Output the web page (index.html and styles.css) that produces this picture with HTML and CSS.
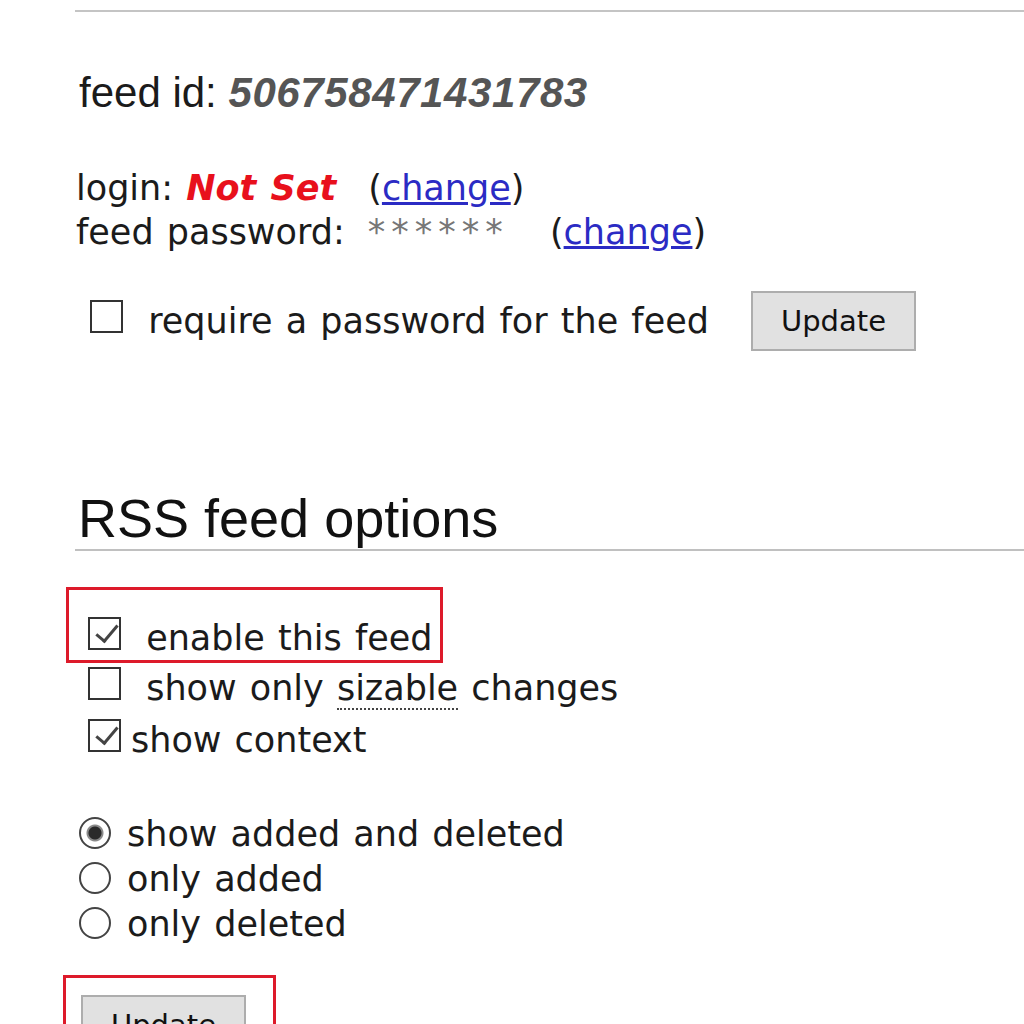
FILE: index.html
```html
<!DOCTYPE html>
<html lang="en">
<head>
<meta charset="UTF-8">
<title>Feed settings</title>
<link rel="stylesheet" href="styles.css">
</head>
<body>
<div class="page">
<hr class="rule">

<p class="feed-id">feed id: <b>506758471431783</b></p>

<div class="creds">
<div>login: <em class="not-set">Not Set</em> <span class="chg">(<a href="#">change</a>)</span></div>
<div>feed password: <span class="stars">******</span> <span class="chg2">(<a href="#">change</a>)</span></div>
</div>

<form class="pw-row">
<label class="pw-label"><input type="checkbox" class="cb"> require a password for the feed</label>
<button type="button" class="btn">Update</button>
</form>

<h2 class="section">RSS feed options</h2>

<form class="options">
<div class="mark first">
<label class="opt"><input type="checkbox" class="cb" checked> <span class="t1">enable this feed</span></label>
</div>
<label class="opt row2"><input type="checkbox" class="cb"> <span class="t1">show only <abbr title="changes bigger than a few characters">sizable</abbr> changes</span></label>
<label class="opt row3"><input type="checkbox" class="cb" checked><span class="t3">show context</span></label>

<div class="radios">
<label class="rad"><input type="radio" name="mode" class="rb" checked>show added and deleted</label>
<label class="rad"><input type="radio" name="mode" class="rb">only added</label>
<label class="rad"><input type="radio" name="mode" class="rb">only deleted</label>
</div>

<div class="mark second">
<button type="button" class="btn">Update</button>
</div>
</form>
</div>
</body>
</html>
```

FILE: styles.css
```css
/* feed settings page */
body {
    margin: 0;
    background: #fff;
    color: #1b1b1b;
    font-family: "DejaVu Sans", Verdana, sans-serif;
    font-size: 35px;
    word-spacing: 2px;
}

.page {
    padding-left: 76px;
    overflow: hidden;
    height: 1024px;
}

.rule {
    margin: 10px 0 0 -1px;
    border: 0;
    border-top: 2px solid #c4c4c4;
    height: 0;
}

.feed-id {
    margin: 57px 0 0 3px;
    font-family: "Liberation Sans", Arial, sans-serif;
    font-size: 42px;
    line-height: 48px;
    word-spacing: 0;
}

.feed-id b {
    font-style: italic;
    color: #555;
    letter-spacing: 0.6px;
}

.creds {
    margin-top: 49px;
    line-height: 44px;
}

.not-set {
    color: #e8101c;
    font-weight: bold;
    margin-right: 19px;
}

.stars {
    color: #777;
    letter-spacing: 6px;
    margin: 0 28px 0 10px;
}

a {
    color: #2b2bc4;
}

.pw-row {
    margin-top: 37px;
    display: flex;
    align-items: center;
}

.pw-label {
    line-height: 44px;
    margin-left: 14px;
    margin-right: 42px;
}

.cb {
    appearance: none;
    -webkit-appearance: none;
    box-sizing: border-box;
    width: 33px;
    height: 33px;
    margin: 0 12px 0 0;
    border: 2px solid #333;
    background: #fff;
    vertical-align: baseline;
    position: relative;
}

.cb:checked::after {
    content: "";
    position: absolute;
    left: 11px;
    top: 1px;
    width: 9px;
    height: 19px;
    border-right: 3px solid #444;
    border-bottom: 3px solid #444;
    transform: rotate(40deg);
}

.btn {
    box-sizing: border-box;
    width: 165px;
    height: 60px;
    background: #e1e1e1;
    border: 2px solid #adadad;
    font-family: "DejaVu Sans", Verdana, sans-serif;
    font-size: 29px;
    color: #111;
    padding: 0;
}

.section {
    margin: 137px 0 0 -1px;
    padding: 0 0 1px 3px;
    border-bottom: 2px solid #c0c0c0;
    font-family: "Liberation Sans", Arial, sans-serif;
    font-size: 54px;
    font-weight: normal;
    line-height: 60px;
    color: #111;
    word-spacing: 0;
}

.options {
    margin: 0;
}

.mark {
    display: inline-block;
    border: 3px solid #dd1a2a;
}

.first {
    margin: 36px 0 0 -10px;
    padding: 26px 7px 0 19px;
}

.opt {
    display: block;
    line-height: 44px;
    white-space: nowrap;
}

.row2 {
    margin: 3px 0 0 12px;
}

.row3 {
    margin: 8px 0 0 12px;
}

.row3 .cb {
    margin-right: 10px;
}

abbr {
    text-decoration: none;
    border-bottom: 2px dotted #444;
}

.radios {
    margin-top: 50px;
    line-height: 45px;
}

.rad {
    display: block;
    white-space: nowrap;
}

.rb {
    appearance: none;
    -webkit-appearance: none;
    box-sizing: border-box;
    width: 32px;
    height: 32px;
    margin: 0 16px 0 3px;
    border: 2px solid #444;
    border-radius: 50%;
    background: #fff;
    vertical-align: -3px;
}

.rb:checked {
    background: radial-gradient(circle, #2a2a2a 0 6px, #8a8a8a 7px 8px, #fff 9px);
}

.second {
    margin: 28px 0 0 -13px;
    padding: 17px 27px 20px 15px;
}
```
